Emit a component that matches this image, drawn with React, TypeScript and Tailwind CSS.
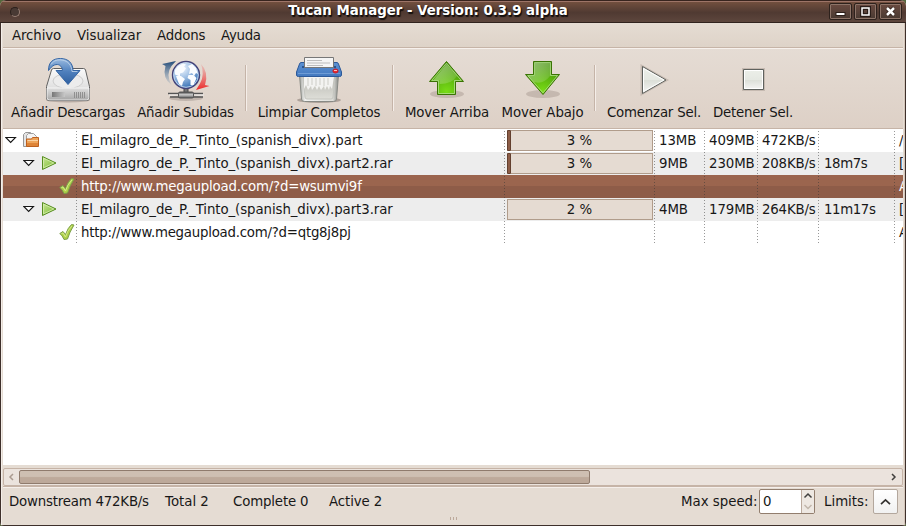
import React from 'react';

function DriveIcon() {
  return (
    <svg width="48" height="48" viewBox="0 0 48 48">
      <defs>
        <linearGradient id="driveTop" x1="0" y1="0" x2="0" y2="1"><stop offset="0" stopColor="#fafafa" /><stop offset="1" stopColor="#cfcfcf" /></linearGradient>
        <linearGradient id="driveFront" x1="0" y1="0" x2="0" y2="1"><stop offset="0" stopColor="#dedede" /><stop offset="1" stopColor="#a9a9a9" /></linearGradient>
        <linearGradient id="slot" x1="0" x2="1"><stop offset="0" stopColor="#777" /><stop offset="1" stopColor="#c8c8c8" /></linearGradient>
        <linearGradient id="blueArrow" x1="0" y1="0" x2="0" y2="1"><stop offset="0" stopColor="#9bbbe0" /><stop offset="0.5" stopColor="#4f80bd" /><stop offset="1" stopColor="#2f5f9f" /></linearGradient>
      </defs>
      <ellipse cx="24" cy="44" rx="22" ry="2.5" fill="#7a6d66" opacity="0.4" />
      <path d="M9.5 12.5h30q1.500 0 2 1.500l4 16.500V42q0 2.500-2.500 2.500H5Q2.500 44.500 2.500 42V30.500L7.500 14q.5-1.500 2-1.500Z" fill="url(#driveTop)" stroke="#606060" />
      <ellipse cx="24" cy="25" rx="15" ry="7.500" fill="#ececec" stroke="#cdcdcd" />
      <path d="M3 32h42v9.500q0 2.500-2.500 2.500h-37Q3 44 3 41.500Z" fill="url(#driveFront)" stroke="#fff" strokeWidth=".7" />
      <path d="M8 36h13v5H8Z" fill="url(#slot)" />
      <path d="M30.500 36v6m2-6v6m2-6v6m2-6v6m2-6v6m2-6v6" stroke="#8a8a8a" strokeWidth=".9" />
      <path d="M4.500 14.500C4.500 6 9 2.500 16.500 2.500c8 0 12.500 5 12.500 12h7L24 28.500 12 14.500h6.500C18 9.500 14.500 7.500 10.500 9c-2.500 1-4 3-6 5.500Z" fill="url(#blueArrow)" stroke="#3465a4" />
      <path d="M7 8.500C10 4 14 3.500 18 4c6 1 9.500 5 10 11.500h5.500" fill="none" stroke="#c3d5eb" strokeWidth=".8" />
    </svg>
  );
}

function GlobeIcon() {
  return (
    <svg width="48" height="48" viewBox="0 0 48 48">
      <defs>
        <radialGradient id="ocean" cx=".35" cy=".25" r=".75"><stop offset="0" stopColor="#f3f8ff" /><stop offset=".45" stopColor="#a4c3e6" /><stop offset="1" stopColor="#3771b5" /></radialGradient>
        <linearGradient id="navyFade" x1="0" y1="0" x2="0" y2="1"><stop offset="0" stopColor="#204a78" /><stop offset="1" stopColor="#7898b6" stopOpacity=".15" /></linearGradient>
        <linearGradient id="redFade" x1="0" y1="0" x2="0" y2="1"><stop offset="0" stopColor="#ef6666" stopOpacity=".2" /><stop offset="1" stopColor="#ec2929" /></linearGradient>
        <linearGradient id="pipe" x1="0" y1="0" x2="0" y2="1"><stop offset="0" stopColor="#444" /><stop offset=".45" stopColor="#ccc" /><stop offset="1" stopColor="#555" /></linearGradient>
      </defs>
      <ellipse cx="24" cy="42" rx="17" ry="3" fill="#766b66" opacity=".3" />
      <path d="M0 8 14 5 9.500 10Q3.500 18 9.500 29 0 22 3.500 10Z" fill="url(#navyFade)" />
      <path d="M39 8Q47 16 43 29l4.500 1L34 34l4-6.500Q43 19 39 8Z" fill="url(#redFade)" />
      <path d="M22 31h4v6h-4Z" fill="#777" stroke="#444" />
      <path d="M6 37.500h35M8 41h33" stroke="#555" strokeWidth="1.300" /><path d="M7 39h35" stroke="#eee" />
      <rect x="16.500" y="36" width="15" height="6" rx="1.500" fill="url(#pipe)" stroke="#555" />
      <circle cx="24" cy="19" r="13.500" fill="url(#ocean)" stroke="#454378" strokeWidth="1.400" />
      <circle cx="24" cy="19" r="12.300" fill="none" stroke="#c7d8ee" strokeWidth=".9" />
      <g fill="#fafcff"><path d="m13 14 3-4 5-2.500 3 1-2 2 2 2-3 4-3 1v3l-5-2Z" /><path d="m14 20 5 0 4 3-2 3-1 4-3-2Z" /><path d="m26 10 4-2 4 4 2 6-2-1-2 3-2-3-3 1 1-5Z" /><path d="m26.500 19 5 0 3 3-3 7-3 0 0-5-3-2Z" /></g>
    </svg>
  );
}

function ShredderIcon() {
  return (
    <svg width="48" height="48" viewBox="0 0 48 48">
      <defs>
        <linearGradient id="bin" x1="0" x2="1"><stop offset="0" stopColor="#a7a9a4" /><stop offset=".15" stopColor="#f2f2f0" /><stop offset=".85" stopColor="#deded9" /><stop offset="1" stopColor="#8a8c88" /></linearGradient>
        <linearGradient id="glass" x1="0" y1="0" x2="0" y2="1"><stop offset="0" stopColor="#b9b9b2" /><stop offset="1" stopColor="#deded8" /></linearGradient>
        <linearGradient id="lid" x1="0" y1="0" x2="0" y2="1"><stop offset="0" stopColor="#5c91d3" /><stop offset="1" stopColor="#4379bf" /></linearGradient>
      </defs>
      <ellipse cx="24" cy="44" rx="22" ry="3" fill="#70645d" opacity=".45" />
      <path d="M4.500 19h39l-2 24q0 2.500-3 2.500h-29q-3 0-3-2.500Z" fill="url(#bin)" stroke="#888a85" />
      <path d="M8 21h32l-2 20q0 2-2 2H12q-2 0-2-2Z" fill="url(#glass)" stroke="#c4c5bf" />
      <path d="M9 21h30l-2 12-2-3-1 4-2-4-2 4-1-4-3 4-2-4-2 4-2-4-3 4-1-4-3 4-2-5-2 4Z" fill="#f3f3f1" />
      <path d="M13 22v8m4-8v7m4-7v8m4-8v7m4-7v8m4-8v7" stroke="#c3c3be" strokeWidth=".8" />
      <path d="M6 6.500h36q1 0 1.500 1.500l3 8V19q0 1.500-2 1.500h-41q-2 0-2-1.500v-3l3-8Q5 6.500 6 6.500Z" fill="url(#lid)" stroke="#2c5999" />
      <path d="M3 17.500h42" stroke="#77a3da" strokeWidth=".8" /><path d="M7 10h34v2H7Z" fill="#29548f" />
      <path d="M9.500 1.500h29v10h-29Z" fill="#f5f5f5" stroke="#777" />
      <path d="M12 4.500h15M12 7h23M12 9.500h16" stroke="#bdbdbd" />
      <ellipse cx="40.500" cy="15" rx="2.600" ry="2" fill="#ef2929" stroke="#c22031" /><path d="M39 14.500h3" stroke="#fff" strokeWidth=".7" />
    </svg>
  );
}

function GreenArrow({ down = false }: { down?: boolean }) {
  return (
    <svg width="48" height="48" viewBox="0 0 48 48">
      <defs>
        <radialGradient id="greenUp" cx=".5" cy=".9" r=".8"><stop offset="0" stopColor="#78dc16" /><stop offset="1" stopColor="#469409" /></radialGradient>
        <linearGradient id="greenShine" x1="0" y1="0" x2="1" y2="1"><stop stopColor="#fff" stopOpacity=".45" /><stop offset="1" stopColor="#fff" stopOpacity=".08" /></linearGradient>
      </defs>
      <ellipse cx="24" cy="38" rx="17" ry="4" fill="#62544b" opacity=".22" />
      <path d={down ? 'M14.500 5.500h18v13h8L24 38.500 6.500 18.500h8Z' : 'M23.500 5.500 40.500 25.500h-8v13h-18v-13h-8Z'} fill="url(#greenUp)" stroke="#3a7304" />
      <path d={down ? 'M15.500 6.500h16v13h7L24 36.800 8.700 19.500h6.800Z' : 'M23.500 7.200 38.300 24.500H31.500v13h-16v-13H8.700Z'} fill="none" stroke="#b8e297" strokeOpacity=".75" />
      <path d={down ? 'M16 7h15v13Q24 29 15 26L9 20h7Z' : 'M23.500 8 34 20Q29 28 16.500 28v-4h-6Z'} fill="url(#greenShine)" />
    </svg>
  );
}

function MediaIcon({ stop = false }: { stop?: boolean }) {
  return (
    <svg width="48" height="48" viewBox="0 0 48 48">
      <defs><linearGradient id="media" x1="0" y1="0" x2="0" y2="1"><stop stopColor="#ecefe9" /><stop offset=".5" stopColor="#e5e8e2" /><stop offset=".52" stopColor="#dcdfd8" /><stop offset="1" stopColor="#f5f5f4" /></linearGradient></defs>
      <path d={stop ? 'M14.500 13.500h20v20h-20Z' : 'M12 10.500 36 24 12 37.500Z'} fill="url(#media)" stroke="#c6bab1" strokeWidth="3" />
      <path d={stop ? 'M14.500 13.500h20v20h-20Z' : 'M12.500 10.500 36 24 12.500 37.500Z'} fill="url(#media)" stroke="#5f625e" />
      <path d={stop ? 'M15.500 14.500h18v18h-18Z' : 'M13.500 12.500 34 24 13.500 35.500Z'} fill="none" stroke="#fff" />
    </svg>
  );
}

function Tool({ label, width, spacing, children }: { label: string; width: string; spacing: string; children: React.ReactNode }) {
  return (
    <div className={'flex shrink-0 flex-col items-center pt-[7px] ' + width}>
      {children}
      <span className={'mt-px h-4 leading-4 ' + spacing}>{label}</span>
    </div>
  );
}

function Separator() {
  return <div className="mt-4 h-[46px] w-[2px] shrink-0 border-l border-[#c5b4a8] bg-[#f5eee9]" />;
}

function Expander() {
  return <svg className="mb-px shrink-0" width="12" height="8" viewBox="0 0 12 8"><path d="M.8 1.500h9.700L5.650 6.500Z" fill="#fff" stroke="#171717" strokeWidth="1.100" /></svg>;
}

function PackageIcon() {
  return (
    <svg className="mb-px shrink-0" width="18" height="16" viewBox="0 0 18 16">
      <path d="M.5 14.500v-12l2-2h5v3h5v11Z" fill="#e4e4e4" stroke="#969696" />
      <path d="M3.500 12.500v-9l2-2h5l3 3v8Z" fill="#f4f4f4" stroke="#a0a0a0" />
      <path d="M3.500 14.500V7h5l1-1.500h6v9Z" fill="#eda45a" stroke="#bd601e" />
      <path d="M4.500 8.500h10.500" stroke="#f9d3a5" />
      <path d="M4 11h11v3H4Z" fill="#d4701f" opacity=".6" />
    </svg>
  );
}

function PlayIcon() {
  return <svg className="mb-px shrink-0" width="16" height="16" viewBox="0 0 16 16"><defs><linearGradient id="rowPlay" x2="1" y2="1"><stop stopColor="#c8e695" /><stop offset="1" stopColor="#77b82b" /></linearGradient></defs><path d="M.5 1.500 14 8 .5 14.500Z" fill="url(#rowPlay)" stroke="#568c20" /><path d="M1.500 3.200v9.600L11.800 8Z" fill="none" stroke="#ddf2b8" strokeWidth=".7" /></svg>;
}

function CheckIcon() {
  return <svg className="mb-px shrink-0" width="16" height="18" viewBox="0 0 16 18"><path d="m.8 10.500 3.200-2 2.500 3Q9 4.500 12.500 1.500l2.500.5Q10.500 9 8.500 16l-3.500.5Q3.500 12.500.8 10.500Z" fill="#afd147" stroke="#7c9f4c" strokeLinejoin="round" /><path d="m2.500 10.500 1.500-.5 2.500 4Q8 8 12.800 3" fill="none" stroke="#d3e98a" /></svg>;
}

type Row = { kind: 'pkg' | 'file' | 'link'; name: string; nameSpacing: string; progress?: number; done?: string; total?: string; speed?: string; time?: string; path: string; tone: string; bar?: boolean };
const rows: Row[] = [
  { kind: 'pkg', name: 'El_milagro_de_P._Tinto_(spanish_divx).part', nameSpacing: 'tracking-[-0.05px]', progress: 3, done: '13MB', total: '409MB', speed: '472KB/s', path: '/', tone: 'bg-white', bar: true },
  { kind: 'file', name: 'El_milagro_de_P._Tinto_(spanish_divx).part2.rar', nameSpacing: 'tracking-[-0.08px]', progress: 3, done: '9MB', total: '230MB', speed: '208KB/s', time: '18m7s', path: '[', tone: 'bg-[#ededed]', bar: true },
  { kind: 'link', name: 'http://www.megaupload.com/?d=wsumvi9f', nameSpacing: 'tracking-[-0.19px]', path: 'A', tone: 'bg-linear-to-b from-[#9b654e] from-48% to-[#8e5c48] to-50% text-white' },
  { kind: 'file', name: 'El_milagro_de_P._Tinto_(spanish_divx).part3.rar', nameSpacing: 'tracking-[-0.08px]', progress: 2, done: '4MB', total: '179MB', speed: '264KB/s', time: '11m17s', path: '[', tone: 'bg-[#ededed]' },
  { kind: 'link', name: 'http://www.megaupload.com/?d=qtg8j8pj', nameSpacing: 'tracking-[-0.24px]', path: 'A', tone: 'bg-white' },
];

function DownloadRow({ row }: { row: Row }) {
  return (
    <div className={'flex h-[23px] w-[900px] overflow-hidden leading-[23px] ' + row.tone}>
      <div className={'flex w-[74px] shrink-0 items-center ' + (row.kind === 'pkg' ? 'gap-[6px] pl-[2px]' : row.kind === 'file' ? 'gap-[7px] pl-[20px]' : 'pl-[56px]')}>
        {row.kind !== 'link' && <Expander />}
        {row.kind === 'pkg' ? <PackageIcon /> : row.kind === 'file' ? <PlayIcon /> : <CheckIcon />}
      </div>
      <div className={'w-[428px] shrink-0 pl-[4px] ' + row.nameSpacing}>{row.name}</div>
      <div className="w-[150px] shrink-0 py-px pl-[2px] pr-[2px]">
        {row.progress && (
          <div className="flex h-[21px] w-[146px] border border-[#b09c8b] bg-[#e5dbd2] leading-[19px]">
            <div className={row.bar ? '-my-px -ml-px w-[4px] shrink-0 rounded-[1px] border border-[#63402f] bg-[#8c5d47]' : 'w-[3px]'} />
            <div className="grow pr-[4px] text-center">{row.progress} %</div>
          </div>
        )}
      </div>
      <div className="w-[50px] shrink-0 pl-[4px] tracking-[-0.1px]">{row.done}</div>
      <div className="w-[53px] shrink-0 pl-[4px] tracking-[-0.1px]">{row.total}</div>
      <div className="w-[61px] shrink-0 pl-[4px] tracking-[-0.18px]">{row.speed}</div>
      <div className="w-[76px] shrink-0 pl-[5px] tracking-[-0.4px]">{row.time}</div>
      <div className="w-[8px] shrink-0 pl-[4px]">{row.path}</div>
    </div>
  );
}

function Chevron({ dir, color = '#41403e' }: { dir: 'up' | 'down' | 'left' | 'right'; color?: string }) {
  const paths = { up: 'M1.500 5.500 5 2l3.500 3.500', down: 'M1.500 2 5 5.500 8.500 2', left: 'M6 1 3 4l3 3', right: 'M4 1l3 3-3 3' };
  return <svg className="shrink-0" width="10" height="8" viewBox="0 0 10 8"><path d={paths[dir]} fill="none" stroke={color} strokeWidth="1.500" /></svg>;
}

function WindowButton({ type }: { type: 'min' | 'max' | 'close' }) {
  return (
    <button className="flex h-[17px] w-[23px] items-center justify-center rounded-[2px] border border-[#2d211c] bg-linear-to-b from-[#6a4a40] to-[#493a32] p-0 shadow-[inset_0_0_0_1px_#8d7468]">
      <svg width="11" height="11" viewBox="0 0 11 11"><g fill="none" stroke="#2b1e19" strokeWidth="4">{type === 'min' ? <path d="M.5 8h10" /> : type === 'max' ? <path d="M2 2h7v7H2Z" /> : <path d="m2 2 7 7m0-7-7 7" />}</g><g fill="none" stroke="#fff" strokeWidth="2">{type === 'min' ? <path d="M1.500 8h8" /> : type === 'max' ? <path d="M2 2h7v7H2Z" strokeWidth="1.500" /> : <path d="m2 2 7 7m0-7-7 7" strokeWidth="2.500" />}</g></svg>
    </button>
  );
}

export default function App() {
  return (
    <div className="h-[526px] w-[906px] overflow-hidden bg-[#55683d] font-['DejaVu_Sans',sans-serif] text-[13.333px] whitespace-nowrap text-[#171717]">
      <div className="flex h-[526px] flex-col overflow-hidden rounded-t-[6px] rounded-b-[4px] bg-[#e5dcd3]">
        <header className="flex h-[23px] shrink-0 items-center border-t border-b border-t-[#38241e] border-b-[#30231e] bg-linear-to-b from-[#75513f] via-[#503a32] via-55% to-[#5d463d] pr-[4px] pl-[10px] shadow-[inset_0_1px_0_#9d7467]">
          <div className="size-[10px] rounded-full border border-[#9a8176] bg-[#493a34] border-t-[#2b201c] border-l-[#2b201c]" />
          <h1 className="grow pr-px pb-[2px] pl-[8px] text-center text-[13.333px] leading-[19px] font-bold text-white [text-shadow:1px_1px_1px_#15100e,1px_2px_1px_#15100e]">Tucan Manager - Version: 0.3.9 alpha</h1>
          <div className="ml-[-56px] w-[56px] shrink-0" />
          <div className="-ml-[0px] flex shrink-0 gap-[2px] pl-0"><WindowButton type="min" /><WindowButton type="max" /><WindowButton type="close" /></div>
        </header>
        <div className="flex min-h-0 grow flex-col border-x border-b border-[#3e302b]">
          <div className="flex min-h-0 grow flex-col border-x border-l-[#f4eee9] border-r-[#d4c6ba] pl-px pr-px">
            <nav className="flex h-[25px] shrink-0 items-center border-b border-[#c6b4a7] bg-linear-to-b from-[#e5dcd3] to-[#ded3c8] pt-[2px] pl-[9px]">
              <span className="w-[65px] tracking-[-0.1px]">Archivo</span><span className="w-[80px]">Visualizar</span><span className="w-[64px] tracking-[-0.2px]">Addons</span><span className="tracking-[-0.3px]">Ayuda</span>
            </nav>
            <div className="flex h-[81px] shrink-0 overflow-hidden border-t border-b border-t-[#f7f1ed] border-b-[#c6b4a7] bg-linear-to-b from-[#e5dcd4] to-[#ddd0c6]">
              <Tool label="Añadir Descargas" width="w-[130px]" spacing="tracking-[-0.22px]"><DriveIcon /></Tool>
              <Tool label="Añadir Subidas" width="w-[105px]" spacing="tracking-[-0.27px]"><GlobeIcon /></Tool>
              <div className="w-[7px]" /><Separator />
              <Tool label="Limpiar Completos" width="w-[144px]" spacing="tracking-[-0.17px]"><ShredderIcon /></Tool><div className="w-px" /><Separator />
              <Tool label="Mover Arriba" width="w-[106px]" spacing="tracking-[-0.12px]"><GreenArrow /></Tool>
              <Tool label="Mover Abajo" width="w-[85px]" spacing="tracking-[-0.1px]"><GreenArrow down /></Tool>
              <div className="w-[9px]" /><Separator />
              <Tool label="Comenzar Sel." width="w-[116px]" spacing="tracking-[-0.2px]"><MediaIcon /></Tool>
              <Tool label="Detener Sel." width="w-[82px]" spacing="tracking-[-0.23px]"><MediaIcon stop /></Tool>
            </div>
            <main className="relative h-[336px] shrink-0 bg-white">
              {rows.map((row) => <DownloadRow key={row.name} row={row} />)}
              <div className="pointer-events-none absolute top-[2px] left-0 flex h-[113px]">
                {['w-[74px]', 'w-[428px]', 'w-[150px]', 'w-[50px]', 'w-[53px]', 'w-[61px]', 'w-[76px]'].map((w) => <div key={w} className={'flex justify-end ' + w}><i className="h-full w-px bg-[repeating-linear-gradient(to_bottom,#33333380_0,#33333380_1px,transparent_1px,transparent_3px)]" /></div>)}
              </div>
            </main>
            <div className="mt-[3px] flex h-[18px] shrink-0 items-center rounded-[2px] border border-[#c6b4a7] bg-[#ebe3dd]">
              <div className="flex w-[15px] justify-center"><Chevron dir="left" color="#aa9b90" /></div>
              <div className="h-[14px] w-[571px] rounded-[2px] border border-[#8f7b6d] bg-linear-to-b from-[#cebfb2] from-45% to-[#bda99a] to-55%" />
              <div className="flex grow justify-end pr-[4px]"><Chevron dir="right" /></div>
            </div>
            <footer className="flex h-[37px] shrink-0 flex-col border-t border-[#c6b4a7] shadow-[inset_0_1px_0_#f5efeb]">
              <div className="flex h-[29px] shrink-0 items-center pl-[6px]">
                <span className="w-[156px] shrink-0 tracking-[-0.2px]">Downstream 472KB/s</span><span className="w-[68px] shrink-0">Total 2</span><span className="w-[96px] shrink-0 tracking-[-0.15px]">Complete 0</span><span className="w-[352px] shrink-0 tracking-[-0.1px]">Active 2</span>
                <span className="w-[78px] shrink-0">Max speed:</span>
                <div className="flex h-[25px] w-[56px] shrink-0 overflow-hidden rounded-[2px] border border-[#927e6e] bg-white">
                  <span className="w-[41px] pl-[3px] leading-[23px]">0</span>
                  <div className="flex grow flex-col items-center justify-around border-l border-[#bbaa9d] bg-[#eee8e2]"><Chevron dir="up" /><Chevron dir="down" color="#c1b6ab" /></div>
                </div>
                <span className="w-[58px] shrink-0 pl-[9px]">Limits:</span>
                <button className="flex h-[25px] w-[25px] shrink-0 items-center justify-center rounded-[2px] border border-[#b3a79d] bg-linear-to-b from-white to-[#f1f1f1] p-0"><svg width="11" height="8" viewBox="0 0 11 8"><path d="M1 6.200 5.500 2 10 6.200" fill="none" stroke="#33312f" strokeWidth="1.700" /></svg></button>
              </div>
              <div className="mt-px flex justify-center gap-[2px]"><i className="h-[3px] w-px bg-[#bca99b]" /><i className="h-[3px] w-px bg-[#bca99b]" /><i className="h-[3px] w-px bg-[#bca99b]" /></div>
            </footer>
          </div>
        </div>
      </div>
    </div>
  );
}
